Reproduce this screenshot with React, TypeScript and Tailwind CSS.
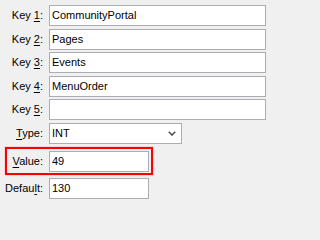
import React from 'react';

const font = { fontFamily: '"Liberation Sans", Arial, sans-serif' };

const Label = ({ pre, key_, post }: { pre: string; key_: string; post: string }) => (
  <span className="whitespace-nowrap text-[11px] text-black">
    {pre}
    <u className="underline-offset-[2px]">{key_}</u>
    {post}
  </span>
);

const TextBox = ({ value, width }: { value: string; width: string }) => (
  <div
    className={`${width} h-[21px] bg-white border border-[#abadb3] flex items-center pl-[2px] text-[11px] text-black`}
  >
    {value}
  </div>
);

const Row = ({ label, children }: { label: React.ReactNode; children: React.ReactNode }) => (
  <div className="flex items-center h-[21px]">
    <div className="w-[49px] flex justify-end pr-[6px]">{label}</div>
    {children}
  </div>
);

export default function App() {
  const keys = ['CommunityPortal', 'Pages', 'Events', 'MenuOrder', ''];

  return (
    <div className="w-full min-h-screen bg-[#f0f0f0] overflow-hidden" style={font}>
      <div className="w-[271px] flex flex-col gap-[2.5px] pt-[5px]">
        {keys.map((k, i) => (
          <Row key={i} label={<Label pre="Key " key_={String(i + 1)} post=":" />}>
            <TextBox value={k} width="w-[217px]" />
          </Row>
        ))}

        {/* Type dropdown */}
        <Row label={<Label pre="" key_="T" post="ype:" />}>
          <div className="w-[133px] h-[21px] bg-white border border-[#abadb3] flex items-center justify-between pl-[2px] pr-[5px] text-[11px] text-black">
            <span>INT</span>
            <svg width="8" height="5" viewBox="0 0 8 5" className="mt-[1px]">
              <path d="M0.8 0.8 L4 4 L7.2 0.8" fill="none" stroke="#505050" strokeWidth="1.6" />
            </svg>
          </div>
        </Row>

        {/* Highlighted value */}
        <div className="mt-[1px] ml-[5px] w-[148px] h-[28px] border-2 border-[#ff0000] shadow-[0_0_1px_#ff6060] flex items-center">
          <div className="w-[42px] flex justify-end pr-[6px]">
            <Label pre="" key_="V" post="alue:" />
          </div>
          <TextBox value="49" width="w-[100px]" />
        </div>

        <Row label={<Label pre="Defau" key_="l" post="t:" />}>
          <TextBox value="130" width="w-[100px]" />
        </Row>
      </div>
    </div>
  );
}
